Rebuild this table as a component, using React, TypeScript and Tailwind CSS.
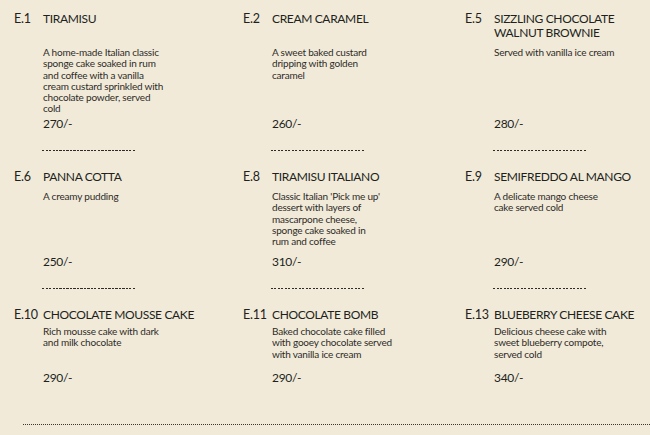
import React from "react";

type Item = { code: string; title: string[]; desc: string[]; price: string };

const rows: { header: string; desc: string; items: Item[]; dashes: boolean; gapAfter: string }[] = [
  {
    header: "h-[35px]",
    desc: "h-[70px]",
    dashes: true,
    gapAfter: "mb-[19px]",
    items: [
      {
        code: "E.1",
        title: ["TIRAMISU"],
        desc: [
          "A home-made Italian classic",
          "sponge cake soaked in rum",
          "and coffee with a vanilla",
          "cream custard sprinkled with",
          "chocolate powder, served",
          "cold",
        ],
        price: "270/-",
      },
      {
        code: "E.2",
        title: ["CREAM CARAMEL"],
        desc: ["A sweet baked custard", "dripping with golden", "caramel"],
        price: "260/-",
      },
      {
        code: "E.5",
        title: ["SIZZLING CHOCOLATE", "WALNUT BROWNIE"],
        desc: ["Served with vanilla ice cream"],
        price: "280/-",
      },
    ],
  },
  {
    header: "h-[21px]",
    desc: "h-[64px]",
    dashes: true,
    gapAfter: "mb-[19px]",
    items: [
      { code: "E.6", title: ["PANNA COTTA"], desc: ["A creamy pudding"], price: "250/-" },
      {
        code: "E.8",
        title: ["TIRAMISU ITALIANO"],
        desc: [
          "Classic Italian 'Pick me up'",
          "dessert with layers of",
          "mascarpone cheese,",
          "sponge cake soaked in",
          "rum and coffee",
        ],
        price: "310/-",
      },
      {
        code: "E.9",
        title: ["SEMIFREDDO AL MANGO"],
        desc: ["A delicate mango cheese", "cake served cold"],
        price: "290/-",
      },
    ],
  },
  {
    header: "h-[18px]",
    desc: "h-[45px]",
    dashes: false,
    gapAfter: "",
    items: [
      {
        code: "E.10",
        title: ["CHOCOLATE MOUSSE CAKE"],
        desc: ["Rich mousse cake with dark", "and milk chocolate"],
        price: "290/-",
      },
      {
        code: "E.11",
        title: ["CHOCOLATE BOMB"],
        desc: ["Baked chocolate cake filled", "with gooey chocolate served", "with vanilla ice cream"],
        price: "290/-",
      },
      {
        code: "E.13",
        title: ["BLUEBERRY CHEESE CAKE"],
        desc: ["Delicious cheese cake with", "sweet blueberry compote,", "served cold"],
        price: "340/-",
      },
    ],
  },
];

function Cell({ item, header, desc, dashes }: { item: Item; header: string; desc: string; dashes: boolean }) {
  return (
    <div className="flex flex-col">
      <div className={`flex ${header}`}>
        <span className="w-[29px] shrink-0 text-[12.5px] leading-[14px] tracking-[-0.2px]">{item.code}</span>
        <div className="text-[12px] leading-[14px] tracking-[-0.35px] whitespace-nowrap">
          {item.title.map((t, i) => (
            <div key={i}>{t}</div>
          ))}
        </div>
      </div>
      <div className={`pl-[29px] ${desc} text-[10px] leading-[11.3px] tracking-[-0.2px] text-[#2e2b27] whitespace-nowrap`}>
        {item.desc.map((d, i) => (
          <div key={i}>{d}</div>
        ))}
      </div>
      <div className="pl-[29px] text-[12px] leading-[14px] tracking-[-0.3px]">{item.price}</div>
      {dashes && (
        <div className="ml-[28px] mt-[19px] w-[94px] h-px bg-[repeating-linear-gradient(90deg,#2f2b27_0_2px,transparent_2px_3.5px)]" />
      )}
    </div>
  );
}

export default function App() {
  return (
    <div
      className="w-[650px] h-[435px] overflow-hidden bg-[#f1ead9] text-[#221f1c] pl-[14px] pt-[12px]"
      style={{ fontFamily: "Lato, 'Noto Sans', sans-serif" }}
    >
      {rows.map((row, ri) => (
        <div key={ri} className={`grid grid-cols-[229px_222px_1fr] ${row.gapAfter}`}>
          {row.items.map((it) => (
            <Cell key={it.code} item={it} header={row.header} desc={row.desc} dashes={row.dashes} />
          ))}
        </div>
      ))}
      <div className="ml-[9px] mt-[39px] border-t border-dotted border-[#3a3632]" />
    </div>
  );
}
